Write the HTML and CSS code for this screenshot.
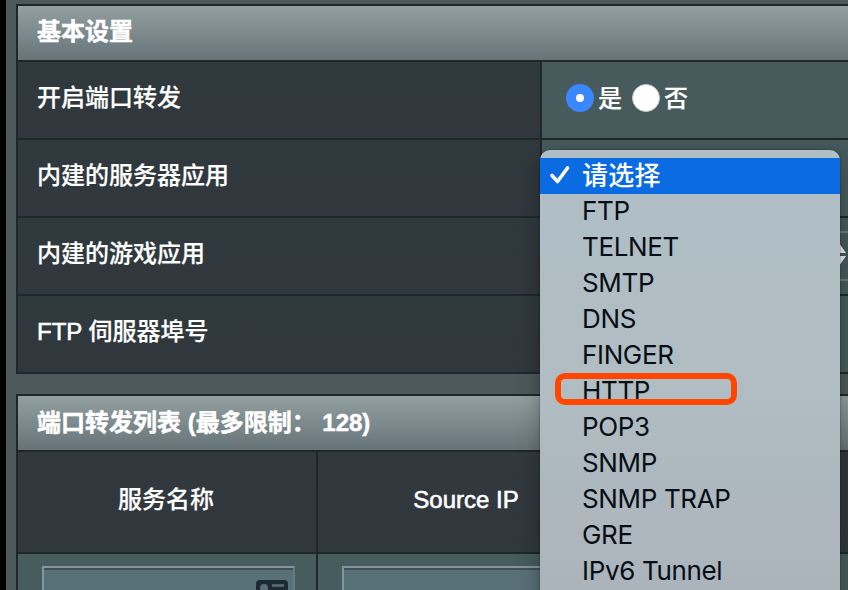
FILE: index.html
```
<!DOCTYPE html>
<html lang="zh-CN">
<head>
<meta charset="utf-8">
<title>端口转发</title>
<link rel="stylesheet" href="styles.css">
</head>
<body>
<main class="page">
  <section class="panel">
    <h2 class="panel-title">基本设置</h2>
    <div class="row"><div class="label">开启端口转发</div>
      <div class="value">
        <label class="choice"><span class="radio checked"></span><span class="choice-text">是</span></label>
        <label class="choice"><span class="radio"></span><span class="choice-text">否</span></label>
      </div>
    </div>
    <div class="row"><div class="label">内建的服务器应用</div><div class="value"></div></div>
    <div class="row"><div class="label">内建的游戏应用</div>
      <div class="value select-cell">
        <div class="select">
          <svg class="arrows" width="14" height="23" viewBox="0 0 14 23"><path d="M7 0L14 10H0ZM0 13H14L7 23Z" fill="#f0f2f4"/></svg>
        </div>
      </div>
    </div>
    <div class="row"><div class="label"><span class="latin">FTP</span> 伺服器埠号</div><div class="value"></div></div>
  </section>

  <section class="panel">
    <h2 class="panel-title list-title">端口转发列表 (最多限制： 128)</h2>
    <div class="columns heads"><div>服务名称</div><div class="latin">Source IP</div><div></div></div>
    <div class="columns fields">
      <div><div class="input">
        <svg class="card" width="32" height="24" viewBox="0 0 32 24"><rect width="32" height="24" rx="4" fill="#1c2b33"/><circle cx="8" cy="8" r="4" fill="#587077"/><path d="M16 5.5H28M16 11.5H28M3 18C3 12 13 12 13 18" fill="none" stroke="#587077" stroke-width="2.5"/></svg>
      </div></div>
      <div><div class="input"></div></div>
      <div></div>
    </div>
  </section>

  <div class="menu">
    <div class="item selected"><svg class="check" width="20" height="18" viewBox="0 0 20 18"><path d="M2 9.5L7.5 15.5L17.5 2" fill="none" stroke="#fff" stroke-width="3.6" stroke-linecap="round" stroke-linejoin="round"/></svg>请选择</div>
    <div class="item">FTP</div>
    <div class="item">TELNET</div>
    <div class="item">SMTP</div>
    <div class="item">DNS</div>
    <div class="item">FINGER</div>
    <div class="item">HTTP<span class="marker"></span></div>
    <div class="item">POP3</div>
    <div class="item">SNMP</div>
    <div class="item">SNMP TRAP</div>
    <div class="item">GRE</div>
    <div class="item">IPv6 Tunnel</div>
  </div>
</main>
</body>
</html>
```
FILE: styles.css
```
* { box-sizing: border-box; }
body { margin: 0; background: #4d595a; }
.page {
  position: relative;
  width: 848px;
  height: 590px;
  overflow: hidden;
  padding: 4px 0 0 10px;
  border-left: 6px solid #000;
  color: #fff;
  font: 500 24px "Liberation Sans", "Noto Sans CJK SC", sans-serif;
}
.panel {
  width: 1000px;
  margin-bottom: 20px;
  border: 2px solid #20272c;
}
.panel-title {
  margin: 0;
  height: 54px;
  padding-left: 19px;
  background: linear-gradient(#93a0a1, #66747a);
  font-size: 24px;
  font-weight: 700;
  line-height: 52px;
  -webkit-text-stroke: 0.5px #fff;
}
.row {
  display: grid;
  grid-template-columns: 522px 1fr;
  height: 78px;
  border-top: 2px solid #20272c;
}
.label {
  padding-left: 19px;
  background: linear-gradient(#2f3a3d, #31373e);
  line-height: 72px;
  -webkit-text-stroke: 0.2px #fff;
}
.latin { -webkit-text-stroke: 0.6px #fff; }
.value {
  display: flex;
  align-items: center;
  gap: 10px;
  padding: 0 0 4px 24px;
  border-left: 2px solid #20272c;
  background: #475b5d;
}
.choice { display: flex; align-items: center; gap: 4px; }
.choice-text { padding-bottom: 4px; -webkit-text-stroke: 0.2px #fff; }
.radio {
  width: 28px;
  height: 28px;
  border: 1px solid #c5cccd;
  border-radius: 50%;
  background: #fff;
}
.radio.checked {
  border: 10px solid #3b87fd;
}
.select-cell { padding: 0; }
.select {
  display: flex;
  align-items: center;
  justify-content: flex-end;
  width: 320px;
  height: 50px;
  padding: 0 14px 3px 0;
  border: 2px solid #72797f;
  background: #47595e;
}
.list-title { line-height: 53px; }
.columns {
  display: grid;
  grid-template-columns: 298px 300px 1fr;
  border-top: 2px solid #20272c;
}
.columns > div + div { border-left: 2px solid #20272c; }
.heads {
  height: 102px;
  background: linear-gradient(#31393f, #30383d);
  line-height: 96px;
  text-align: center;
  -webkit-text-stroke: 0.2px #fff;
}
.heads > div { padding-right: 2px; }
.fields { height: 80px; background: #465c5e; }
.fields > div { padding: 12px 21px 0 24px; }
.input {
  display: flex;
  justify-content: flex-end;
  height: 50px;
  padding: 12px 5px 0 0;
  border: 2px solid #82979b;
  border-color: #82979b #657b80 #657b80 #82979b;
  background: #587077;
  box-shadow: inset 0 2px #3f5056;
}
.menu {
  position: absolute;
  top: 150px;
  left: 534px;
  width: 300px;
  height: 460px;
  padding-top: 8px;
  border-radius: 10px;
  background: linear-gradient(#afbfc6, #b0bdc2 50%, #abb3ba);
  box-shadow: 0 0 2px rgba(0, 0, 0, .5), 0 6px 24px rgba(0, 0, 0, .3);
  color: #060d14;
  font: 400 26px Inter, "Noto Sans CJK SC", sans-serif;
  letter-spacing: -0.35px;
}
.item {
  position: relative;
  height: 36px;
  padding-left: 42px;
  line-height: 33px;
}
.selected {
  background: #0a6be2;
  color: #fff;
  font-weight: 500;
  line-height: 35px;
  letter-spacing: 0.2px;
}
.check { position: absolute; left: 10px; top: 8px; }
.marker {
  position: absolute;
  left: 15px;
  top: -1px;
  width: 182px;
  height: 32px;
  border: 6px solid #ff4500;
  border-radius: 10px;
}
```
